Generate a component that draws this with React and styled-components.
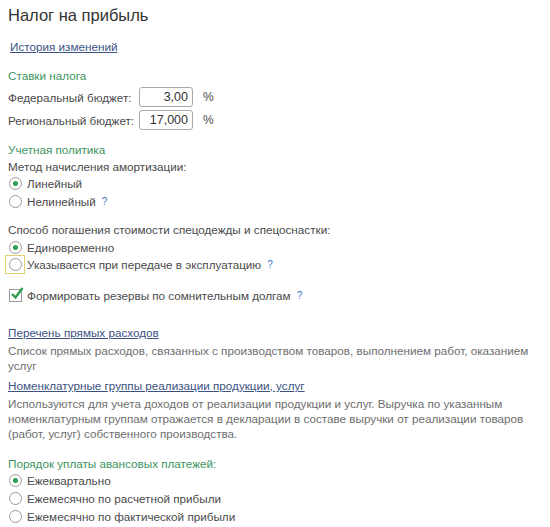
import React from "react";
import styled, { createGlobalStyle } from "styled-components";

const GlobalStyle = createGlobalStyle`
  body {
    margin: 0;
    background: #ffffff;
    font-family: "Liberation Sans", Arial, sans-serif;
    font-size: 11.7px;
    color: #4a4a4a;
  }
`;

function Radio({ checked, focused, children, help }) {
  return (
    <OptionRow>
      <ControlFrame focused={focused}>
        <RadioCircle>{checked && <RadioDot />}</RadioCircle>
      </ControlFrame>
      <OptionText>{children}</OptionText>
      {help && <Help>?</Help>}
    </OptionRow>
  );
}

function Check({ children, help }) {
  return (
    <OptionRow>
      <ControlFrame>
        <CheckBox>
          <svg width="16" height="16" viewBox="0 0 16 16">
            <path d="M3 8 L6.5 11.5 L13.5 2" fill="none" stroke="#2e9e4f" strokeWidth="2.4" />
          </svg>
        </CheckBox>
      </ControlFrame>
      <OptionText>{children}</OptionText>
      {help && <Help>?</Help>}
    </OptionRow>
  );
}

function RateField({ label, value }) {
  return (
    <FieldRow>
      <FieldLabel>{label}</FieldLabel>
      <NumberBox>{value}</NumberBox>
      <Percent>%</Percent>
    </FieldRow>
  );
}

export default function App() {
  return (
    <Page>
      <GlobalStyle />
      <Title>Налог на прибыль</Title>

      <HistoryLink href="#">История изменений</HistoryLink>

      <Section top={12}>
        <GreenTitle>Ставки налога</GreenTitle>
        <Fields>
          <RateField label="Федеральный бюджет:" value="3,00" />
          <RateField label="Региональный бюджет:" value="17,000" />
        </Fields>
      </Section>

      <Section top={9}>
        <GreenTitle>Учетная политика</GreenTitle>
        <Caption>Метод начисления амортизации:</Caption>
        <Radio checked>Линейный</Radio>
        <Radio help>Нелинейный</Radio>
      </Section>

      <Section top={11.5}>
        <Caption>Способ погашения стоимости спецодежды и спецоснастки:</Caption>
        <Radio checked>Единовременно</Radio>
        <Radio focused help>Указывается при передаче в эксплуатацию</Radio>
      </Section>

      <Section top={12.5}>
        <Check help>Формировать резервы по сомнительным долгам</Check>
      </Section>

      <Section top={20.5}>
        <PlainLink href="#">Перечень прямых расходов</PlainLink>
        <Description>
          Список прямых расходов, связанных с производством товаров, выполнением работ, оказанием услуг
        </Description>
      </Section>

      <Section top={3.5}>
        <PlainLink href="#">Номенклатурные группы реализации продукции, услуг</PlainLink>
        <Description>
          Используются для учета доходов от реализации продукции и услуг. Выручка по указанным
          номенклатурным группам отражается в декларации в составе выручки от реализации товаров
          (работ, услуг) собственного производства.
        </Description>
      </Section>

      <Section top={14}>
        <GreenTitle>Порядок уплаты авансовых платежей:</GreenTitle>
        <Radio checked>Ежеквартально</Radio>
        <Radio>Ежемесячно по расчетной прибыли</Radio>
        <Radio>Ежемесячно по фактической прибыли</Radio>
      </Section>
    </Page>
  );
}

const Page = styled.div`
  width: 550px;
  padding: 4px 14px 0 8px;
  box-sizing: border-box;
  display: flex;
  flex-direction: column;
  align-items: flex-start;
`;

const Title = styled.h1`
  margin: 0;
  font-size: 16.5px;
  font-weight: normal;
  line-height: 22px;
  color: #333333;
`;

const HistoryLink = styled.a`
  display: inline-block;
  margin: 11.5px 0 0 2px;
  line-height: 17px;
  color: #3b5283;
  text-decoration: underline;
`;

const PlainLink = styled.a`
  display: inline-block;
  line-height: 17px;
  color: #3b5283;
  text-decoration: underline;
`;

const Section = styled.div`
  margin-top: ${(p) => p.top}px;
  display: flex;
  flex-direction: column;
  align-items: flex-start;
`;

const GreenTitle = styled.div`
  line-height: 17px;
  color: #3c9460;
`;

const Caption = styled.div`
  line-height: 17px;
  color: #4a4a4a;
`;

const Fields = styled.div`
  margin-top: 2px;
  display: flex;
  flex-direction: column;
`;

const FieldRow = styled.div`
  display: flex;
  align-items: center;
  height: 23px;
`;

const FieldLabel = styled.div`
  width: 131px;
  white-space: nowrap;
`;

const NumberBox = styled.div`
  width: 54px;
  height: 20px;
  box-sizing: border-box;
  border: 1px solid #a9a9a9;
  border-radius: 3px;
  text-align: right;
  padding-right: 4px;
  line-height: 18px;
  font-size: 12.5px;
  color: #333333;
`;

const Percent = styled.span`
  margin-left: 10px;
  font-size: 12px;
`;

const OptionRow = styled.div`
  display: flex;
  align-items: center;
  height: 17.7px;
`;

const ControlFrame = styled.div`
  width: 20px;
  height: 19px;
  margin-left: -3px;
  box-sizing: border-box;
  border: 1px solid ${(p) => (p.focused ? "#e3cf73" : "transparent")};
  display: flex;
  align-items: center;
  justify-content: center;
`;

const RadioCircle = styled.div`
  width: 13px;
  height: 13px;
  box-sizing: border-box;
  border: 1px solid #9a9a9a;
  border-radius: 50%;
  display: flex;
  align-items: center;
  justify-content: center;
  background: #ffffff;
`;

const RadioDot = styled.div`
  width: 5px;
  height: 5px;
  border-radius: 50%;
  background: #2e9e4f;
`;

const CheckBox = styled.div`
  width: 13px;
  height: 13px;
  box-sizing: border-box;
  border: 1px solid #9a9a9a;
  position: relative;
  background: #ffffff;
  svg {
    position: absolute;
    left: -1px;
    top: -4px;
  }
`;

const OptionText = styled.span`
  margin-left: 2px;
  line-height: 17px;
  white-space: nowrap;
`;

const Help = styled.span`
  margin-left: 6px;
  font-size: 10px;
  color: #3f72c2;
`;

const Description = styled.div`
  line-height: 15px;
  color: #6e6e6e;
  margin-top: 2px;
`;
